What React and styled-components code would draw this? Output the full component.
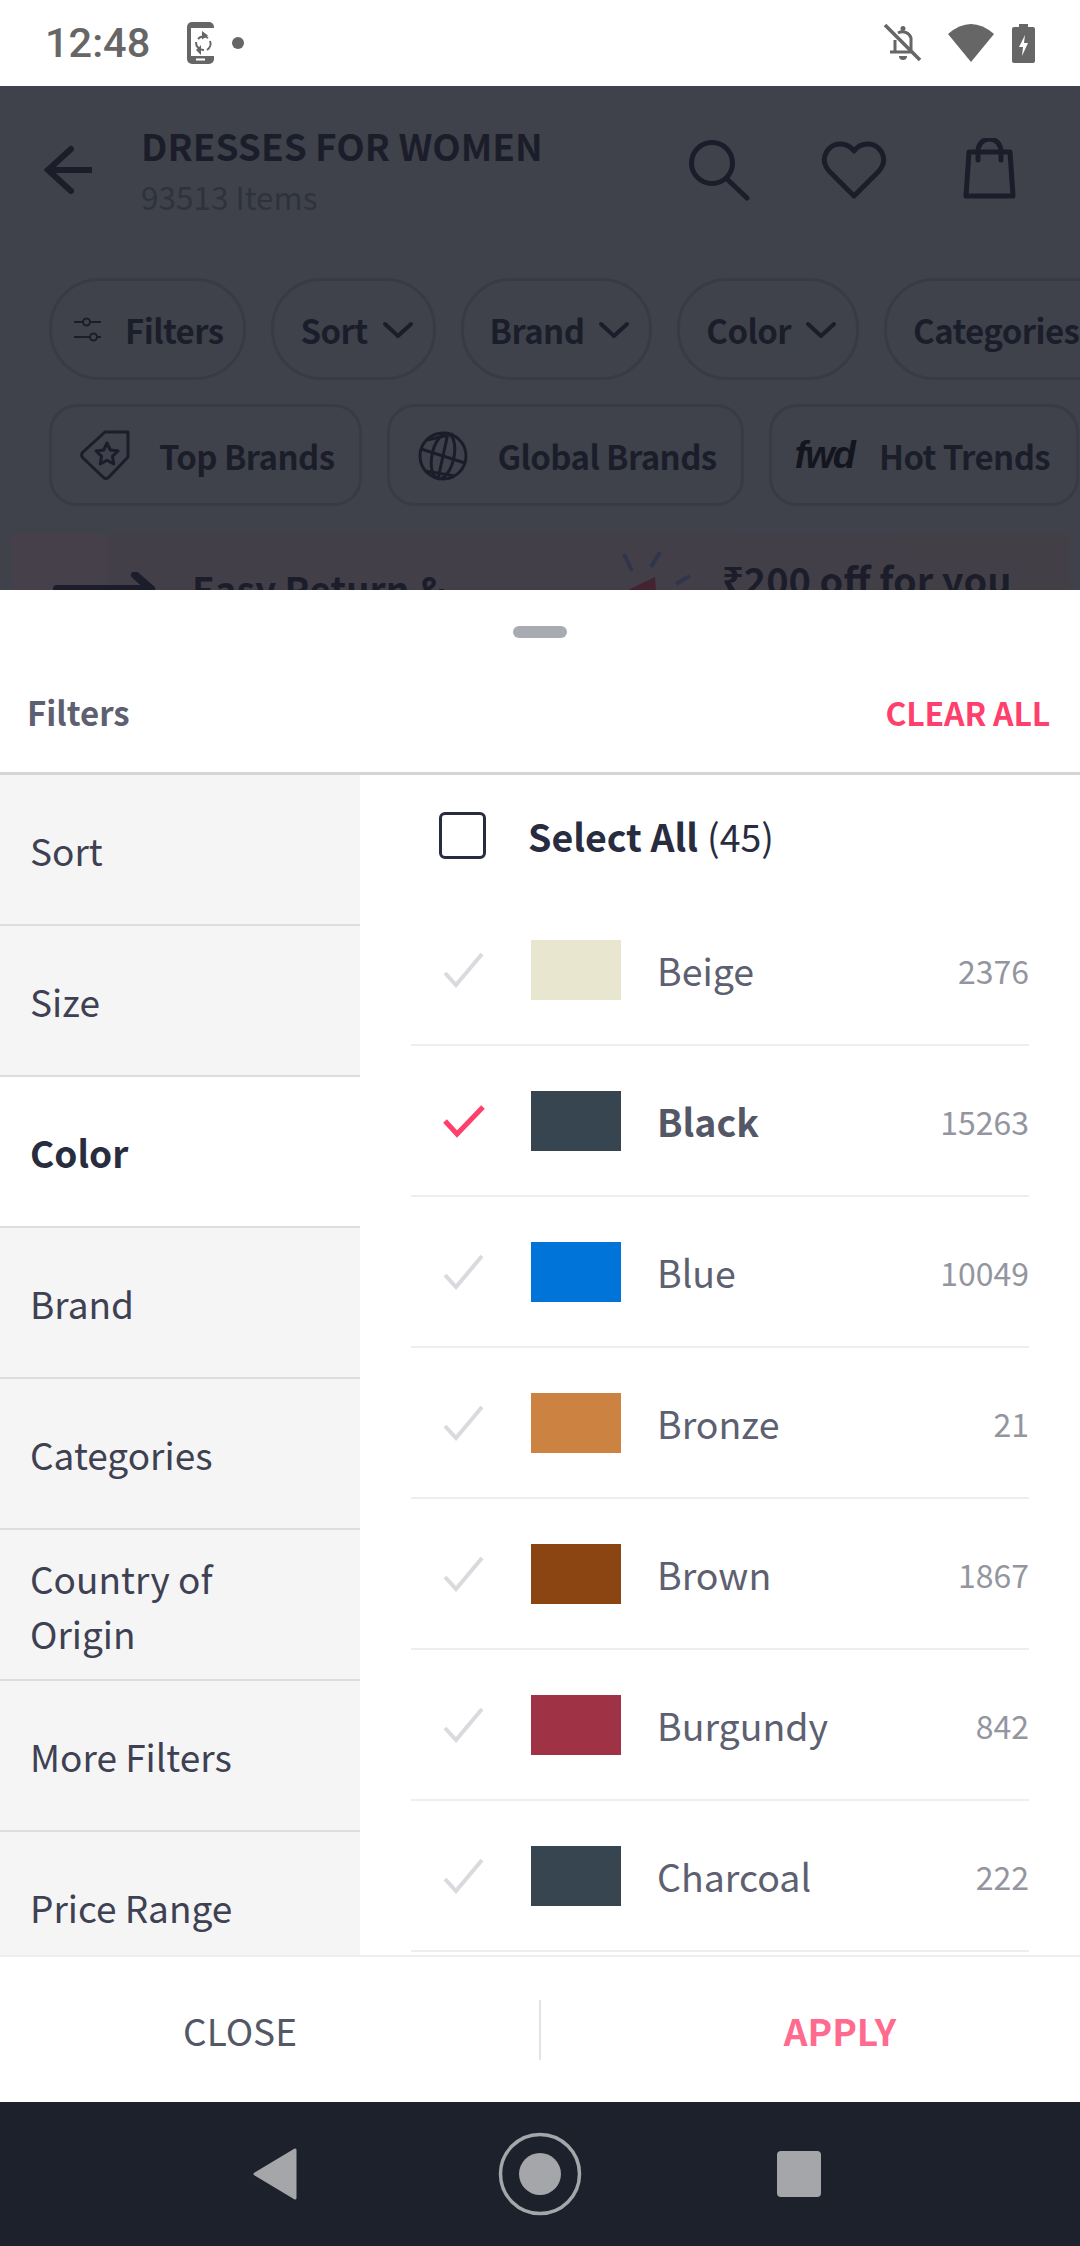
import React from 'react'
import styled, { createGlobalStyle } from 'styled-components'

const FONT = '"Noto Sans CJK SC", "Noto Sans", sans-serif'
const DIM_TEXT = '#1b1e2a'
const PINK = '#ff3f6c'

const GlobalStyle = createGlobalStyle`
  html, body {
    margin: 0;
    padding: 0;
    background: #fff;
  }
  * {
    box-sizing: border-box;
  }
`

const Screen = styled.div`
  width: 1080px;
  height: 2246px;
  display: flex;
  flex-direction: column;
  overflow: hidden;
  font-family: ${FONT};
`

const StatusBar = styled.div`
  height: 86px;
  flex: none;
  display: flex;
  align-items: center;
  padding: 0 45px 0 45px;
  background: #fff;
  color: #666;
`

const Clock = styled.span`
  font-family: Roboto, sans-serif;
  font-size: 41.5px;
  font-weight: 500;
  line-height: 48px;
  margin-right: 37px;
`

const Dot = styled.span`
  width: 12px;
  height: 12px;
  border-radius: 50%;
  background: #666;
  margin-left: 17px;
`

const StatusRight = styled.div`
  margin-left: auto;
  display: flex;
  align-items: center;
  gap: 18px;
`

const Backdrop = styled.div`
  height: 504px;
  flex: none;
  overflow: hidden;
  background: #3f424b;
  color: ${DIM_TEXT};
`

const TopBar = styled.div`
  height: 168px;
  display: flex;
  align-items: center;
  padding: 0 62px 0 44px;
`

const TitleBlock = styled.div`
  margin-left: 43px;
  margin-top: 3px;
  display: flex;
  flex-direction: column;
`

const Title = styled.div`
  font-size: 37px;
  font-weight: 700;
  line-height: 44px;
`

const Subtitle = styled.div`
  margin-top: 4px;
  font-size: 31.5px;
  font-weight: 400;
  line-height: 50px;
  color: #2f323b;
`

const TopActions = styled.div`
  margin-left: auto;
  display: flex;
  align-items: center;
  gap: 66px;
`

const ChipRow = styled.div`
  display: flex;
  gap: 25px;
  padding-left: 49px;
  margin-top: ${p => p.$top}px;
  white-space: nowrap;
`

const Chip = styled.div`
  flex: none;
  display: flex;
  align-items: center;
  height: 102px;
  border: 3px solid #383b44;
  border-radius: ${p => (p.$square ? 28 : 50)}px;
  padding: ${p => p.$pad || '1px 20px 0 26px'};
  gap: ${p => p.$gap || 15}px;
  font-size: 33px;
  letter-spacing: -0.6px;
  font-weight: 700;
`

const FwdMark = styled.span`
  font-family: "Liberation Sans", sans-serif;
  font-size: 38px;
  font-style: italic;
  font-weight: 700;
  letter-spacing: -2px;
  color: #14161f;
`

const Banner = styled.div`
  height: 70px;
  margin: 28px 10px 0 11px;
  display: flex;
  background: linear-gradient(90deg, #45404a 0, #45404a 96px, #433f49 100px, #433f47 100%);
  overflow: hidden;
`

const BannerPart = styled.div`
  display: flex;
  align-items: flex-start;
  flex: none;
  width: ${p => p.$width}px;
  padding: ${p => p.$pad};
  gap: ${p => p.$gap}px;
  white-space: nowrap;
`

const BannerText = styled.span`
  font-weight: 700;
  font-size: ${p => p.$size}px;
  line-height: ${p => p.$size}px;
  margin-top: ${p => p.$top}px;
`

const Sheet = styled.div`
  flex: 1;
  min-height: 0;
  display: flex;
  flex-direction: column;
  background: #fff;
`

const Handle = styled.div`
  width: 54px;
  height: 12px;
  margin: 36px auto 0;
  border-radius: 6px;
  background: #a9abb3;
`

const SheetHeader = styled.div`
  height: 137px;
  flex: none;
  display: flex;
  align-items: center;
  justify-content: space-between;
  padding: 14px 30px 0 27px;
  border-bottom: 3px solid #d4d5d9;
`

const SheetTitle = styled.span`
  font-size: 33px;
  font-weight: 700;
  color: #5d6070;
`

const ClearAll = styled.span`
  font-size: 32px;
  font-weight: 700;
  letter-spacing: -0.2px;
  color: ${PINK};
`

const Body = styled.div`
  flex: 1;
  min-height: 0;
  display: flex;
  overflow: hidden;
`

const Sidebar = styled.div`
  width: 360px;
  flex: none;
  background: #f5f5f6;
`

const SideItem = styled.div`
  height: 151px;
  display: flex;
  align-items: center;
  padding: 2px 70px 0 30px;
  border-bottom: 2px solid #dcdde0;
  font-size: 37px;
  line-height: 55px;
  font-weight: ${p => (p.$active ? 700 : 400)};
  color: ${p => (p.$active ? '#282c3f' : '#3e4152')};
  background: ${p => (p.$active ? '#fff' : 'transparent')};
`

const Options = styled.div`
  flex: 1;
  padding: 0 51px;
`

const SelectAll = styled.div`
  height: 120px;
  display: flex;
  align-items: center;
  padding: 0 0 0 28px;
  font-size: 37.5px;
  color: #282c3f;
`

const CheckBox = styled.span`
  width: 47px;
  height: 47px;
  margin-right: 42px;
  border: 3px solid #282c3f;
  border-radius: 6px;
`

const AllLabel = styled.b`
  font-weight: 700;
  margin-right: 9px;
`

const OptionRow = styled.div`
  height: 151px;
  display: flex;
  align-items: center;
  border-bottom: 2px solid #eeeeef;
`

const Tick = styled.svg`
  width: 44px;
  height: 36px;
  margin-left: 31px;
  flex: none;
`

const Swatch = styled.span`
  width: 90px;
  height: 60px;
  flex: none;
  margin-left: 45px;
  background: ${p => p.$color};
`

const OptionName = styled.span`
  margin-left: 36px;
  font-size: 37.5px;
  font-weight: ${p => (p.$active ? 700 : 400)};
  color: ${p => (p.$active ? '#535766' : '#5d6070')};
`

const OptionCount = styled.span`
  margin-left: auto;
  font-size: 32px;
  color: #94969f;
`

const Footer = styled.div`
  height: 147px;
  flex: none;
  display: grid;
  grid-template-columns: 480px 120px 480px;
  align-items: center;
  justify-items: center;
  background: #fff;
  border-top: 2px solid #eeeeef;
  font-size: 37px;
`

const CloseButton = styled.span`
  color: #535766;
`

const ApplyButton = styled.span`
  font-weight: 700;
  color: #ff6a8f;
`

const FooterRule = styled.span`
  width: 2px;
  height: 60px;
  background: #e4e4e6;
`

const NavBar = styled.div`
  height: 144px;
  flex: none;
  display: grid;
  grid-template-columns: 264px 259px 100px;
  align-items: center;
  padding-left: 226px;
  background: #1c212c;
`

const SIDE_ITEMS = ['Sort', 'Size', 'Color', 'Brand', 'Categories', 'Country of Origin', 'More Filters', 'Price Range']

const COLORS = [
  { name: 'Beige', hex: '#e8e6cf', count: 2376 },
  { name: 'Black', hex: '#36454f', count: 15263, active: true },
  { name: 'Blue', hex: '#0074d9', count: 10049 },
  { name: 'Bronze', hex: '#cc8240', count: 21 },
  { name: 'Brown', hex: '#8b4513', count: 1867 },
  { name: 'Burgundy', hex: '#a03245', count: 842 },
  { name: 'Charcoal', hex: '#36454f', count: 222 },
]

const Chevron = () => (
  <svg width="30" height="18" viewBox="0 0 30 18" fill="none" stroke={DIM_TEXT} strokeWidth="4" strokeLinecap="round" strokeLinejoin="round">
    <path d="M2 3l13 12L28 3" />
  </svg>
)

const PhoneSyncIcon = () => (
  <svg width="28" height="42" viewBox="0 0 28 42">
    <rect x="0" y="0" width="27" height="42" rx="5" fill="#666" />
    <rect x="4" y="6" width="24" height="28" fill="#fff" />
    <rect x="9" y="36.5" width="9" height="2" fill="#fff" />
    <path d="M11 17a7.5 7.5 0 0 1 10-1M23 19a7.5 7.5 0 0 1-3 9M17 28a7.5 7.5 0 0 1-8-8" fill="none" stroke="#666" strokeWidth="2" />
    <path d="M15 9l6 4.500-6 4zM14 23l-5 5 5 5z" fill="#666" />
  </svg>
)

const BellOffIcon = () => (
  <svg width="46" height="38" viewBox="0 0 46 38" fill="none" stroke="#666" strokeWidth="3">
    <path d="M1 1l35 35" strokeWidth="3.500" />
    <path d="M6 28h21M11 28v-12M27 26v-12a9 9 0 0 0-13-5" />
    <path d="M15 32h8a4 4 0 0 1-8 0z" fill="#666" stroke="none" />
    <circle cx="19" cy="4.500" r="2.500" fill="#666" stroke="none" />
  </svg>
)

const WifiIcon = () => (
  <svg width="46" height="38" viewBox="0 0 46 38">
    <path d="M0 10Q23-10 46 10L23 38z" fill="#666" />
  </svg>
)

const BatteryIcon = () => (
  <svg width="23" height="39" viewBox="0 0 23 39">
    <path d="M7 0h9v3h5a2 2 0 0 1 2 2v32a2 2 0 0 1-2 2H2a2 2 0 0 1-2-2V5a2 2 0 0 1 2-2h5z" fill="#666" />
    <path d="M13 11l-6 12h4l-1 9 6-13h-4z" fill="#fff" />
  </svg>
)

const BackArrow = () => (
  <svg width="54" height="54" viewBox="0 0 54 54" fill="none" stroke={DIM_TEXT} strokeWidth="6" strokeLinecap="round">
    <path d="M4 27h44" strokeLinecap="butt" />
    <path d="M27 6L4 27l23 21" />
  </svg>
)

const SearchIcon = () => (
  <svg width="66" height="66" viewBox="0 -2 66 66" fill="none" stroke={DIM_TEXT} strokeWidth="5" strokeLinecap="round">
    <circle cx="23" cy="24" r="20.500" />
    <path d="M38 40l20 19" />
  </svg>
)

const HeartIcon = () => (
  <svg width="66" height="60" viewBox="0 0 66 60" fill="none" stroke={DIM_TEXT} strokeWidth="5" strokeLinejoin="round">
    <path d="M33 56L8 31C-3 18 8 3 20 4c5 .4 10 3 13 7 3-4 8-6.600 13-7 12-1 23 14 12 27z" />
  </svg>
)

const BagIcon = () => (
  <svg width="65" height="64" viewBox="-9 2 65 64" fill="none" stroke={DIM_TEXT} strokeWidth="5" strokeLinecap="round" strokeLinejoin="round">
    <path d="M7 16h41l3 44H4z" />
    <path d="M16 24v-8C16 8 21 3 27.500 3S39 8 39 16v8" />
  </svg>
)

const SlidersIcon = () => (
  <svg width="28" height="26" viewBox="0 0 28 26" fill="none" stroke={DIM_TEXT} strokeWidth="2">
    <path d="M0 5h9M16 5h11M0 20h16M23 20h4" />
    <circle cx="12.500" cy="5" r="3.500" />
    <circle cx="19.500" cy="20" r="3.500" />
  </svg>
)

const TagStarIcon = () => (
  <svg width="50" height="52" viewBox="0 0 50 52" fill="none" stroke={DIM_TEXT} strokeWidth="3" strokeLinejoin="round">
    <path d="M25 2h23v25L29 47c-2 2-4 2-6 0L3 28c-2-2-2-4 0-6z" />
    <path d="M27 13l3.300 7 7.700 1-5.600 5.300 1.400 7.700-6.800-3.800-6.800 3.800 1.400-7.700L16 21l7.700-1z" />
  </svg>
)

const GlobeIcon = () => (
  <svg width="50" height="50" viewBox="0 0 50 50" fill="none" stroke={DIM_TEXT} strokeWidth="3">
    <circle cx="25" cy="25" r="23" />
    <ellipse cx="25" cy="25" rx="11" ry="23" transform="rotate(12 25 25)" />
    <path d="M30 2L20 48M3 18l44 14M9 9l26-6M7 40l30 5" />
  </svg>
)

const ReturnArrow = () => (
  <svg width="104" height="30" viewBox="0 0 104 30" fill="none" stroke={DIM_TEXT} strokeWidth="8" strokeLinecap="round">
    <path d="M4 17h94M82 3l16 14" />
  </svg>
)

const MegaphoneIcon = () => (
  <svg width="72" height="40" viewBox="0 0 72 40">
    <path d="M2 2l8 17M38 0l-9 15M54 32l14-8" fill="none" stroke="#31354b" strokeWidth="4" />
    <path d="M33 25L2 40h32z" fill="#43232f" />
  </svg>
)

const GrayTick = () => (
  <Tick viewBox="0 0 44 36" fill="none" stroke="#d9dade" strokeWidth="4">
    <path d="M3 21l11 12L40 2" />
  </Tick>
)

const PinkTick = () => (
  <Tick viewBox="0 0 44 36" fill="none" stroke={PINK} strokeWidth="5">
    <path d="M3 18l12 13L41 4" />
  </Tick>
)

const NavBack = () => (
  <svg width="100" height="60" viewBox="0 0 100 60">
    <path d="M29 30L69 6v48z" fill="#a5a6aa" stroke="#a5a6aa" strokeWidth="3" strokeLinejoin="round" />
  </svg>
)

const NavHome = () => (
  <svg width="100" height="90" viewBox="0 0 100 90" fill="none">
    <circle cx="50" cy="45" r="39.500" stroke="#a5a6aa" strokeWidth="3.500" />
    <circle cx="50" cy="45" r="21" fill="#a5a6aa" />
  </svg>
)

const NavRecents = () => (
  <svg width="100" height="50" viewBox="0 0 100 50">
    <rect x="28" y="2" width="44" height="46" rx="4" fill="#a5a6aa" />
  </svg>
)

export default function App() {
  return (
    <Screen>
      <GlobalStyle />
      <StatusBar>
        <Clock>12:48</Clock>
        <PhoneSyncIcon />
        <Dot />
        <StatusRight>
          <BellOffIcon />
          <WifiIcon />
          <BatteryIcon />
        </StatusRight>
      </StatusBar>

      <Backdrop>
        <TopBar>
          <BackArrow />
          <TitleBlock>
            <Title>DRESSES FOR WOMEN</Title>
            <Subtitle>93513 Items</Subtitle>
          </TitleBlock>
          <TopActions>
            <SearchIcon />
            <HeartIcon />
            <BagIcon />
          </TopActions>
        </TopBar>

        <ChipRow $top={24}>
          <Chip $gap={23} $pad="1px 20px 0 22px"><SlidersIcon />Filters</Chip>
          <Chip><span>Sort</span><Chevron /></Chip>
          <Chip><span>Brand</span><Chevron /></Chip>
          <Chip><span>Color</span><Chevron /></Chip>
          <Chip><span>Categories</span><Chevron /></Chip>
        </ChipRow>

        <ChipRow $top={24}>
          <Chip $square $gap={29} $pad="1px 25px 0 28px"><TagStarIcon />Top Brands</Chip>
          <Chip $square $gap={29} $pad="1px 24px 0 28px"><GlobeIcon />Global Brands</Chip>
          <Chip $square $gap={25} $pad="1px 26px 0 23px"><FwdMark>fwd</FwdMark>Hot Trends</Chip>
        </ChipRow>

        <Banner>
          <BannerPart $width={600} $pad="38px 0 0 42px" $gap={35}>
            <ReturnArrow />
            <BannerText $size={37} $top={-2}>Easy Return &amp;</BannerText>
          </BannerPart>
          <BannerPart $width={450} $pad="18px 0 0 11px" $gap={28}>
            <MegaphoneIcon />
            <BannerText $size={38} $top={8}>₹200 off for you</BannerText>
          </BannerPart>
        </Banner>
      </Backdrop>

      <Sheet>
        <Handle />
        <SheetHeader>
          <SheetTitle>Filters</SheetTitle>
          <ClearAll>CLEAR ALL</ClearAll>
        </SheetHeader>

        <Body>
          <Sidebar>
            {SIDE_ITEMS.map(item => (
              <SideItem key={item} $active={item === 'Color'}>{item}</SideItem>
            ))}
          </Sidebar>
          <Options>
            <SelectAll>
              <CheckBox />
              <AllLabel>Select All</AllLabel> (45)
            </SelectAll>
            {COLORS.map(color => (
              <OptionRow key={color.name}>
                {color.active ? <PinkTick /> : <GrayTick />}
                <Swatch $color={color.hex} />
                <OptionName $active={color.active}>{color.name}</OptionName>
                <OptionCount>{color.count}</OptionCount>
              </OptionRow>
            ))}
          </Options>
        </Body>

        <Footer>
          <CloseButton>CLOSE</CloseButton>
          <FooterRule />
          <ApplyButton>APPLY</ApplyButton>
        </Footer>
      </Sheet>

      <NavBar>
        <NavBack />
        <NavHome />
        <NavRecents />
      </NavBar>
    </Screen>
  )
}
